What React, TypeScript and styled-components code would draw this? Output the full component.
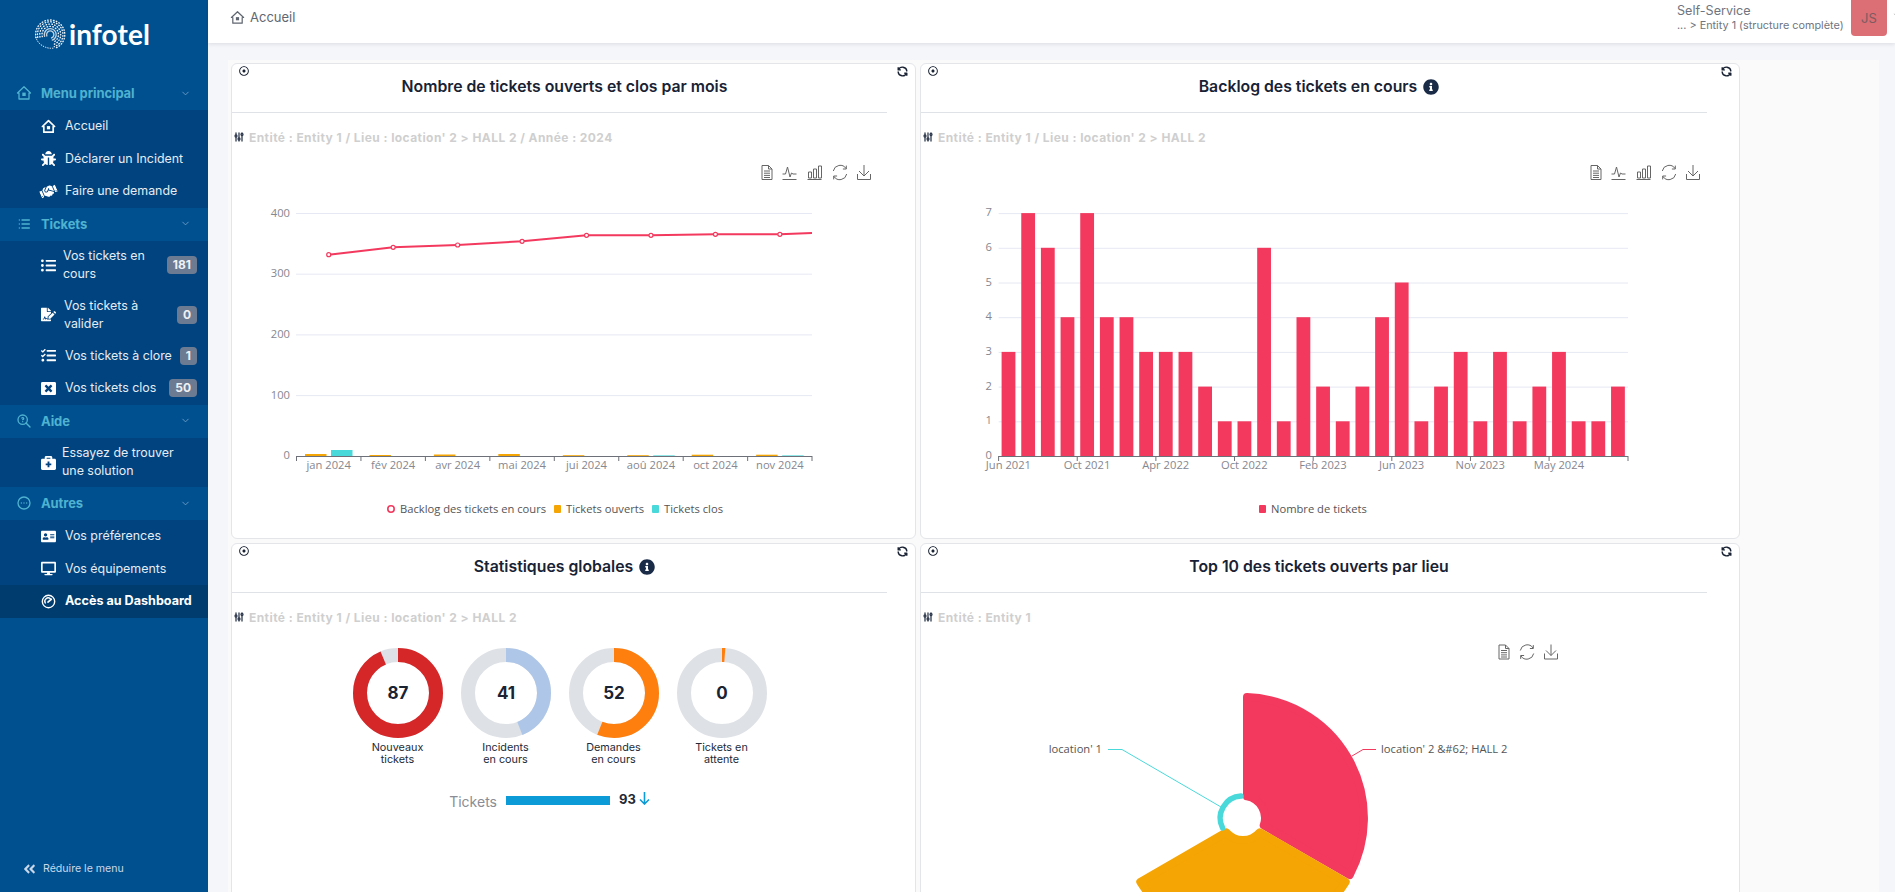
import React from "react";
import styled, { createGlobalStyle } from "styled-components";
import {
  FaAddressCard,
  FaAngleDoubleLeft,
  FaBriefcaseMedical,
  FaBug,
  FaDesktop,
  FaFileSignature,
  FaHandshake,
  FaInfoCircle,
  FaListUl,
  FaRegDotCircle,
  FaTasks,
  FaWindowClose,
} from "react-icons/fa";
import { HiOutlineDotsCircleHorizontal } from "react-icons/hi";
import {
  TbAdjustments,
  TbChevronDown,
  TbList,
  TbRefresh,
  TbZoomQuestion,
} from "react-icons/tb";

const GlobalStyle = createGlobalStyle`
  html, body {
    margin: 0;
    height: 100%;
    overflow: hidden;
    background: #f5f6fa;
    font-family: "Inter", "Liberation Sans", sans-serif;
  }
`;

const Layout = styled.div`
  display: flex;
  height: 892px;
  overflow: hidden;
`;

const Sidebar = styled.aside`
  width: 208px;
  flex: none;
  display: flex;
  flex-direction: column;
  background: #005090;
`;

const LogoBlock = styled.div`
  height: 77px;
  flex: none;
  display: flex;
  align-items: flex-start;
  padding: 19px 0 0 35px;
  box-sizing: border-box;
  gap: 3px;
`;

const LogoText = styled.span`
  font-family: "Lato", sans-serif;
  font-size: 28px;
  line-height: 30px;
  font-weight: 700;
  color: #fff;
  letter-spacing: 0.1px;
`;

const GroupHeader = styled.div`
  height: 33px;
  flex: none;
  display: flex;
  align-items: center;
  padding: 0 17px 1px 16px;
  box-sizing: border-box;
  color: #4fb2cf;
  font-size: 13px;
  font-weight: 700;
  letter-spacing: -0.1px;
  svg:first-child {
    width: 16px;
    height: 16px;
    margin-right: 9px;
  }
  span {
    flex: 1;
  }
`;

const SubMenu = styled.div`
  background: #00437f;
`;

const Item = styled.div<{ $tall?: boolean; $active?: boolean; $gap?: number }>`
  height: ${(p) => (p.$tall ? "49.5px" : "32.5px")};
  display: flex;
  align-items: center;
  padding: 0 11px 0 41px;
  box-sizing: border-box;
  color: ${(p) => (p.$active ? "#fff" : "#e6edf4")};
  background: ${(p) => (p.$active ? "#003c6d" : "transparent")};
  font-size: ${(p) => (p.$active ? "12.6px" : "12.4px")};
  line-height: 18px;
  font-weight: ${(p) => (p.$active ? 700 : 400)};
  svg {
    width: 15px;
    height: 15px;
    flex: none;
    margin-right: ${(p) => p.$gap ?? 9}px;
    color: #fff;
  }
`;

const TiltedHandshake = styled(FaHandshake)`
  transform: rotate(-24deg) scale(1.15);
`;

const ItemLabel = styled.span`
  flex: 1;
`;

const Badge = styled.span`
  flex: none;
  background: #6d7b92;
  color: #eef1f5;
  border-radius: 4px;
  font-size: 12px;
  font-weight: 700;
  line-height: 18px;
  padding: 0 6px;
`;

const CollapseRow = styled.div`
  margin-top: auto;
  height: 30px;
  display: flex;
  align-items: flex-start;
  gap: 7px;
  padding-left: 23px;
  color: #c9d8e8;
  font-size: 10.6px;
  line-height: 14px;
  svg {
    width: 13px;
    height: 14px;
  }
`;

const Main = styled.main`
  flex: 1;
  min-width: 0;
  display: flex;
  flex-direction: column;
`;

const TopBar = styled.header`
  height: 43px;
  flex: none;
  background: #fff;
  box-shadow: 0 1px 4px rgba(20, 30, 60, 0.12);
  display: flex;
  align-items: flex-start;
  padding-left: 22px;
  position: relative;
`;

const Crumb = styled.div`
  display: flex;
  align-items: center;
  gap: 5px;
  height: 34px;
  color: #5f6670;
  font-size: 13px;
`;

const UserBlock = styled.div`
  margin-left: auto;
  display: flex;
  align-items: flex-start;
  gap: 8px;
  width: 218px;
`;

const UserText = styled.div`
  color: #6f7580;
  width: 166px;
  flex: none;
`;

const UserRole = styled.div`
  font-size: 12.6px;
  line-height: 15px;
  margin-top: 3px;
`;

const UserEntity = styled.div`
  font-size: 10.85px;
  line-height: 15px;
  white-space: nowrap;
`;

const Avatar = styled.div`
  width: 36px;
  height: 36px;
  flex: none;
  background: #dc6e76;
  border-radius: 0 0 4px 4px;
  color: #7c5c60;
  font-size: 13px;
  display: flex;
  align-items: center;
  justify-content: center;
`;

const Caret = styled.span`
  color: #6f7580;
  margin-left: -3px;
  margin-top: 10px;
  line-height: 0;
  svg {
    width: 11px;
    height: 11px;
  }
`;

const Content = styled.div`
  margin: 17px 16px 0 20px;
  padding: 3px 0 0 3px;
  background: #fafafa;
  flex: 1;
  min-height: 0;
  overflow: hidden;
`;

const Grid = styled.div`
  display: grid;
  grid-template-columns: 685px 820px;
  grid-auto-rows: 476px;
  gap: 4px;
`;

const Card = styled.section`
  background: #fff;
  border: 1px solid #e3e5e9;
  border-radius: 6px;
  box-sizing: border-box;
  overflow: hidden;
`;

const CardTop = styled.div`
  height: 14px;
  display: flex;
  justify-content: space-between;
  align-items: center;
  padding: 0 6px 0 7px;
  color: #1a2333;
  svg {
    width: 10px;
    height: 10px;
  }
  .refresh {
    width: 13px;
    height: 13px;
    stroke-width: 2.5;
  }
`;

const TitleBlock = styled.div<{ $inset: number }>`
  height: 34px;
  margin-right: ${(p) => p.$inset}px;
  padding-left: 10px;
  border-bottom: 1px solid #dfe2e6;
  display: flex;
  justify-content: center;
  gap: 6px;
  color: #182235;
  font-size: 15.8px;
  line-height: 17px;
  font-weight: 600;
  svg {
    width: 16px;
    height: 16px;
    margin-top: 1px;
    color: #1a2b47;
  }
`;

const FilterLine = styled.div`
  margin-top: 16px;
  height: 16px;
  display: flex;
  align-items: center;
  gap: 4px;
  padding-left: 1px;
  color: #cfcfcf;
  font-size: 12px;
  font-weight: 700;
  letter-spacing: 0.43px;
  white-space: nowrap;
  svg {
    width: 12px;
    height: 12px;
    color: #2f3a4e;
    stroke-width: 2.6;
  }
`;

const ChartSvg = styled.svg`
  display: block;
  margin-top: 5px;
  font-family: "Open Sans", sans-serif;
  font-size: 11.2px;
`;

const RingRow = styled.div`
  margin: 23px 28px 0 0;
  display: flex;
  justify-content: center;
`;

const RingCell = styled.div`
  width: 108px;
  display: flex;
  flex-direction: column;
  align-items: center;
  text-align: center;
  color: #232a36;
  font-size: 10.8px;
  line-height: 12px;
  svg {
    margin-bottom: 4px;
  }
`;

const TicketRow = styled.div`
  margin: 24px 48px 0 0;
  display: flex;
  justify-content: center;
  align-items: center;
  gap: 9px;
  height: 20px;
`;

const TicketLabel = styled.span`
  color: #8a8d93;
  font-size: 14px;
  margin-top: 3px;
`;

const TicketBar = styled.div`
  width: 104px;
  height: 9px;
  background: #0d9bd8;
`;

const TicketValue = styled.span`
  display: flex;
  align-items: center;
  gap: 3px;
  color: #1f2937;
  font-size: 13px;
  font-weight: 700;
  margin-top: -3px;
`;

const RED = "#f3395e";
const ORANGE = "#f5a504";
const TEAL = "#4ad9da";
const AXIS = "#6e7079";
const AXIS_TEXT = "#86878f";
const LEGEND_TEXT = "#555";
const GRIDLINE = "#e6e8f3";

const HomeIcon = ({ heavy }: { heavy?: boolean }) => (
  <svg viewBox="0 0 16 16" width="15" height="15" fill="none" stroke="currentColor" strokeWidth={heavy ? 1.8 : 1.3} strokeLinejoin="round">
    <path d="M1.5 8 8 1.8 14.5 8H13v6H3V8z" />
    <rect x="6.3" y="7.6" width="3.4" height="3.4" fill="currentColor" stroke="none" />
  </svg>
);

const GaugeIcon = () => (
  <svg viewBox="0 0 16 16" fill="none" stroke="currentColor" strokeWidth="1.5" strokeLinecap="round">
    <circle cx="8" cy="8" r="6.6" />
    <path d="M4.6 9.6A3.6 3.6 0 0 1 10 5" />
    <path d="M7.4 8.6 11 5.6" strokeWidth="1.8" />
  </svg>
);

const Swirl = () => (
  <svg width="31" height="31" viewBox="0 0 34 34" fill="none" stroke="#fff" strokeLinecap="round">
    {[4, 6.5, 9, 11.5, 14, 16].map((r, i) => (
      <path
        key={r}
        d={`M${17 - r} ${18 + r * 0.15}A${r} ${r} 0 1 1 ${17 + r * 0.3} ${17 + r * 0.95}`}
        strokeWidth={1.5}
        strokeDasharray={i < 2 ? "none" : "0.6 2.6"}
        opacity={i < 2 ? 0.75 : 0.95}
      />
    ))}
    <path d="M1 20C3 28 12 33 20 32" strokeWidth="1" strokeDasharray="0.6 2" />
  </svg>
);

type ToolKind = "doc" | "line" | "bar" | "restore" | "save";

const Tool = ({ kind, x, y }: { kind: ToolKind; x: number; y: number }) => (
  <g transform={`translate(${x - 7.5} ${y - 7.5})`} fill="none" stroke="#666" strokeWidth="1">
    {kind === "doc" && (
      <path d="M2.5.5h6.5l3.5 3.5v10.5h-10zM9 .5V4h3.5M4.5 6h6M4.5 8.2h6M4.5 10.4h6M4.5 12.5h6" />
    )}
    {kind === "line" && <path d="M0 14.5h14M0 9h3l2-7 2.5 10 1.5-4 1.5 1H14" />}
    {kind === "bar" && <path d="M0 14.5h14M1 13V7h3v6zM6 13V4h3v9zM11 13V1h3v12z" />}
    {kind === "restore" && (
      <path d="M.8 6A7 7 0 0 1 13.6 3.6M13.8.6v3.4h-3.4M14.2 9A7 7 0 0 1 1.4 11.4M1.2 14.4V11h3.4" />
    )}
    {kind === "save" && <path d="M7.5 0v11M2.5 6l5 5 5-5M1 9v5.5h13V9" />}
  </g>
);

const Tools = ({ items }: { items: [ToolKind, number][] }) => (
  <>
    {items.map(([kind, x]) => (
      <Tool key={kind} kind={kind} x={x} y={172.5} />
    ))}
  </>
);

const Ticks1 = ["jan 2024", "fév 2024", "avr 2024", "mai 2024", "jui 2024", "aoû 2024", "oct 2024", "nov 2024"];
const Points1 = [254.7, 247.3, 245, 241.3, 235.3, 235.3, 234.3, 234.3];
const Opened = [2, 1, 1.5, 2, 0.8, 0.8, 1.3, 1.3];
const Closed = [6, 0, 0, 0, 0, 0.6, 0, 0.6];

const MonthlyChart = () => {
  const x0 = 296.5;
  const step = 64.45;
  const linePath = Points1.map((y, i) => `${i ? "L" : "M"}${x0 + step * (i + 0.5)} ${y}`).join("") + "L812 233";
  return (
    <ChartSvg width="683" height="386" viewBox="232 150 683 386">
      <Tools items={[["doc", 767], ["line", 790], ["bar", 815], ["restore", 840], ["save", 864]]} />
      {[400, 300, 200, 100].map((v, i) => (
        <g key={v}>
          <line x1="296" x2="812" y1={213.5 + i * 60.7} y2={213.5 + i * 60.7} stroke={GRIDLINE} />
          <text x="290" y={213.5 + i * 60.7 + 3} textAnchor="end" fill={AXIS_TEXT}>{v}</text>
        </g>
      ))}
      <text x="290" y="459" textAnchor="end" fill={AXIS_TEXT}>0</text>
      {Ticks1.map((label, i) => {
        const left = x0 + step * i;
        return (
          <g key={label}>
            <rect x={left + 8.5} y={456 - Opened[i]} width="21.5" height={Opened[i]} fill={ORANGE} />
            <rect x={left + 34.5} y={456 - Closed[i]} width="21.5" height={Closed[i]} fill={TEAL} />
            <line x1={left} x2={left} y1="456" y2="461" stroke={AXIS} />
            <text x={left + step / 2} y="469" textAnchor="middle" fill={AXIS_TEXT}>{label}</text>
          </g>
        );
      })}
      <line x1="812" x2="812" y1="456" y2="461" stroke={AXIS} />
      <line x1="296" x2="812" y1="456.5" y2="456.5" stroke={AXIS} />
      <path d={linePath} fill="none" stroke={RED} strokeWidth="2" />
      {Points1.map((y, i) => (
        <circle key={i} cx={x0 + step * (i + 0.5)} cy={y} r="2" fill="#fff" stroke={RED} strokeWidth="1.2" />
      ))}
      <circle cx="391" cy="509" r="3.2" fill="#fff" stroke={RED} strokeWidth="1.6" />
      <text x="400" y="513" fill={LEGEND_TEXT}>Backlog des tickets en cours</text>
      <rect x="554" y="505" width="7" height="8" rx="1" fill={ORANGE} />
      <text x="566" y="513" fill={LEGEND_TEXT}>Tickets ouverts</text>
      <rect x="652" y="505" width="7" height="8" rx="1" fill={TEAL} />
      <text x="664" y="513" fill={LEGEND_TEXT}>Tickets clos</text>
    </ChartSvg>
  );
};

const BacklogValues = [3, 7, 6, 4, 7, 4, 4, 3, 3, 3, 2, 1, 1, 6, 1, 4, 2, 1, 2, 4, 5, 1, 2, 3, 1, 3, 1, 2, 3, 1, 1, 2];
const BacklogTicks = ["Jun 2021", "Oct 2021", "Apr 2022", "Oct 2022", "Feb 2023", "Jun 2023", "Nov 2023", "May 2024"];

const BacklogChart = () => {
  const x0 = 998.6;
  const step = 19.66;
  const unit = 34.7;
  return (
    <ChartSvg width="817" height="386" viewBox="921 150 817 386">
      <Tools items={[["doc", 1596], ["line", 1619], ["bar", 1644], ["restore", 1669], ["save", 1693]]} />
      {[7, 6, 5, 4, 3, 2, 1].map((v) => (
        <g key={v}>
          <line x1={x0} x2="1628" y1={456.5 - v * unit} y2={456.5 - v * unit} stroke={GRIDLINE} />
          <text x="992" y={459 - v * unit} textAnchor="end" fill={AXIS_TEXT}>{v}</text>
        </g>
      ))}
      <text x="992" y="459" textAnchor="end" fill={AXIS_TEXT}>0</text>
      {BacklogValues.map((v, i) => (
        <rect key={i} x={x0 + step * i + 3} y={456 - v * unit} width="13.8" height={v * unit} fill={RED} />
      ))}
      {BacklogTicks.map((label, i) => (
        <g key={label}>
          <line x1={x0 + 78.64 * i} x2={x0 + 78.64 * i} y1="456" y2="461" stroke={AXIS} />
          <text x={x0 + 9.8 + 78.64 * i} y="469" textAnchor="middle" fill={AXIS_TEXT}>{label}</text>
        </g>
      ))}
      <line x1="1628" x2="1628" y1="456" y2="461" stroke={AXIS} />
      <line x1={x0} x2="1628" y1="456.5" y2="456.5" stroke={AXIS} />
      <rect x="1259" y="505" width="7" height="8" rx="1" fill={RED} />
      <text x="1271" y="513" fill={LEGEND_TEXT}>Nombre de tickets</text>
    </ChartSvg>
  );
};

// sector drawn 4px inside its real edge, the round stroke gives the soft corners
const sector = (a0: number, a1: number, outer: number, inner: number) => {
  const cx = 1243;
  const cy = 818;
  const inset = 4;
  const pt = (deg: number, r: number) => {
    const rad = (deg * Math.PI) / 180;
    return `${(cx + r * Math.sin(rad)).toFixed(1)} ${(cy - r * Math.cos(rad)).toFixed(1)}`;
  };
  const off = (r: number) => (Math.asin(inset / r) * 180) / Math.PI;
  const R = outer - inset;
  const r = inner + inset;
  return `M${pt(a0 + off(r), r)}L${pt(a0 + off(R), R)}A${R} ${R} 0 0 1 ${pt(a1 - off(R), R)}L${pt(a1 - off(r), r)}A${r} ${r} 0 0 0 ${pt(a0 + off(r), r)}Z`;
};

const RoseChart = () => (
  <ChartSvg width="817" height="386" viewBox="921 630 817 386">
    <Tool kind="doc" x={1504} y={652} />
    <Tool kind="restore" x={1527} y={652} />
    <Tool kind="save" x={1551} y={652} />
    <path d={sector(0, 120, 125, 18)} fill={RED} stroke={RED} strokeWidth="8" strokeLinejoin="round" />
    <path d={sector(120, 240, 125, 18)} fill={ORANGE} stroke={ORANGE} strokeWidth="8" strokeLinejoin="round" />
    <path d="M1222.6 828A22 22 0 0 1 1241 796.1" fill="none" stroke={TEAL} strokeWidth="5.5" strokeLinecap="round" />
    <path d="M1108 749.5H1122L1221 807" fill="none" stroke={TEAL} />
    <path d="M1376 749.5H1363L1352 756" fill="none" stroke={RED} />
    <text x="1102" y="752.5" textAnchor="end" fill={LEGEND_TEXT}>location' 1</text>
    <text x="1381" y="752.5" fill={LEGEND_TEXT}>{"location' 2 &#62; HALL 2"}</text>
  </ChartSvg>
);

const Ring = ({ pct, color, value }: { pct: number; color: string; value: string }) => {
  const c = 2 * Math.PI * 38;
  return (
    <svg width="90" height="90" viewBox="0 0 90 90">
      <circle cx="45" cy="45" r="38" fill="none" stroke="#dee1e6" strokeWidth="14" />
      <circle
        cx="45"
        cy="45"
        r="38"
        fill="none"
        stroke={color}
        strokeWidth="14"
        strokeDasharray={`${(c * pct) / 100} ${c}`}
        transform="rotate(-90 45 45)"
      />
      <text x="45" y="51" textAnchor="middle" fontSize="17" fontWeight="700" fill="#1a2333">{value}</text>
    </svg>
  );
};

const rings = [
  { pct: 93.5, color: "#d62728", value: "87", label: ["Nouveaux", "tickets"] },
  { pct: 44, color: "#aec7e8", value: "41", label: ["Incidents", "en cours"] },
  { pct: 56, color: "#ff7f0e", value: "52", label: ["Demandes", "en cours"] },
  { pct: 1.2, color: "#ff7f0e", value: "0", label: ["Tickets en", "attente"] },
];

const CardHead = ({ title, info, inset }: { title: string; info?: boolean; inset: number }) => (
  <>
    <CardTop>
      <FaRegDotCircle />
      <TbRefresh className="refresh" />
    </CardTop>
    <TitleBlock $inset={inset}>
      {title}
      {info && <FaInfoCircle />}
    </TitleBlock>
  </>
);

const Filter = ({ text }: { text: string }) => (
  <FilterLine>
    <TbAdjustments />
    {text}
  </FilterLine>
);

const Group = ({ icon, title }: { icon: React.ReactNode; title: string }) => (
  <GroupHeader>
    {icon}
    <span>{title}</span>
    <TbChevronDown size={11} color="#6d9dc4" />
  </GroupHeader>
);

const App = () => (
  <Layout>
    <GlobalStyle />
    <Sidebar>
      <LogoBlock>
        <Swirl />
        <LogoText>infotel</LogoText>
      </LogoBlock>
      <Group icon={<HomeIcon />} title="Menu principal" />
      <SubMenu>
        <Item><HomeIcon heavy />Accueil</Item>
        <Item><FaBug />Déclarer un Incident</Item>
        <Item><TiltedHandshake />Faire une demande</Item>
      </SubMenu>
      <Group icon={<TbList />} title="Tickets" />
      <SubMenu>
        <Item $tall $gap={7}>
          <FaListUl />
          <ItemLabel>Vos tickets en cours</ItemLabel>
          <Badge>181</Badge>
        </Item>
        <Item $tall $gap={8}>
          <FaFileSignature />
          <ItemLabel>Vos tickets à valider</ItemLabel>
          <Badge>0</Badge>
        </Item>
        <Item>
          <FaTasks />
          <ItemLabel>Vos tickets à clore</ItemLabel>
          <Badge>1</Badge>
        </Item>
        <Item>
          <FaWindowClose />
          <ItemLabel>Vos tickets clos</ItemLabel>
          <Badge>50</Badge>
        </Item>
      </SubMenu>
      <Group icon={<TbZoomQuestion />} title="Aide" />
      <SubMenu>
        <Item $tall $gap={6}>
          <FaBriefcaseMedical />
          <ItemLabel>Essayez de trouver une solution</ItemLabel>
        </Item>
      </SubMenu>
      <Group icon={<HiOutlineDotsCircleHorizontal />} title="Autres" />
      <SubMenu>
        <Item><FaAddressCard />Vos préférences</Item>
        <Item><FaDesktop />Vos équipements</Item>
        <Item $active><GaugeIcon />Accès au Dashboard</Item>
      </SubMenu>
      <CollapseRow>
        <FaAngleDoubleLeft />
        Réduire le menu
      </CollapseRow>
    </Sidebar>
    <Main>
      <TopBar>
        <Crumb>
          <HomeIcon />
          Accueil
        </Crumb>
        <UserBlock>
          <UserText>
            <UserRole>Self-Service</UserRole>
            <UserEntity>... &gt; Entity 1 (structure complète)</UserEntity>
          </UserText>
          <Avatar>JS</Avatar>
          <Caret><TbChevronDown /></Caret>
        </UserBlock>
      </TopBar>
      <Content>
        <Grid>
          <Card>
            <CardHead inset={28} title="Nombre de tickets ouverts et clos par mois" />
            <Filter text="Entité : Entity 1 / Lieu : location' 2 > HALL 2 / Année : 2024" />
            <MonthlyChart />
          </Card>
          <Card>
            <CardHead inset={32} title="Backlog des tickets en cours" info />
            <Filter text="Entité : Entity 1 / Lieu : location' 2 > HALL 2" />
            <BacklogChart />
          </Card>
          <Card>
            <CardHead inset={28} title="Statistiques globales" info />
            <Filter text="Entité : Entity 1 / Lieu : location' 2 > HALL 2" />
            <RingRow>
              {rings.map((r) => (
                <RingCell key={r.value}>
                  <Ring pct={r.pct} color={r.color} value={r.value} />
                  {r.label[0]}
                  <br />
                  {r.label[1]}
                </RingCell>
              ))}
            </RingRow>
            <TicketRow>
              <TicketLabel>Tickets</TicketLabel>
              <TicketBar />
              <TicketValue>
                93
                <svg width="11" height="13" viewBox="0 0 11 13" fill="none" stroke="#0d9bd8" strokeWidth="1.6">
                  <path d="M5.5 0v12M1 7.5l4.5 4.5L10 7.5" />
                </svg>
              </TicketValue>
            </TicketRow>
          </Card>
          <Card>
            <CardHead inset={32} title="Top 10 des tickets ouverts par lieu" />
            <Filter text="Entité : Entity 1" />
            <RoseChart />
          </Card>
        </Grid>
      </Content>
    </Main>
  </Layout>
);

export default App;
